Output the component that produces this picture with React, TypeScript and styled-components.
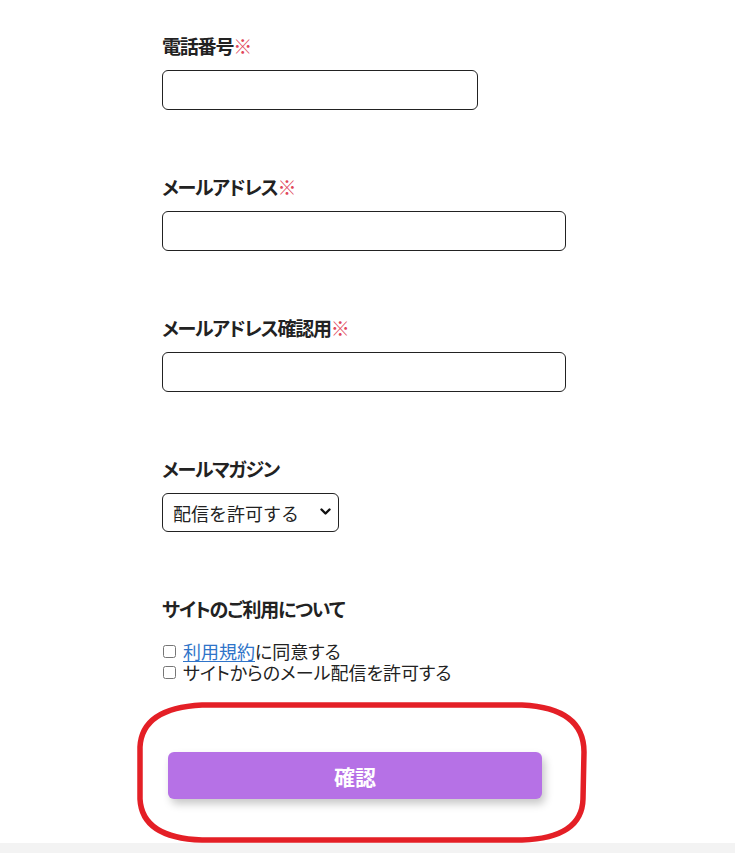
import React from "react";
import styled, { createGlobalStyle } from "styled-components";

const Global = createGlobalStyle`
  html, body { margin: 0; padding: 0; background: #fff; }
  body {
    font-family: "Noto Sans CJK JP", "Noto Sans", sans-serif;
    color: #222;
  }
`;

const Page = styled.div`
  min-height: 853px;
  display: flex;
  flex-direction: column;
`;

const Form = styled.form`
  display: flex;
  flex-direction: column;
  gap: 63px;
  padding: 32px 0 0 162px;
  width: 404px;
`;

const Field = styled.div`
  display: flex;
  flex-direction: column;
  align-items: flex-start;
`;

const Label = styled.label`
  font-size: 19px;
  font-weight: 700;
  line-height: 28px;
  letter-spacing: -1.2px;
  font-feature-settings: "palt" 1;
  margin-bottom: 10px;
  color: #222;
`;

const Req = styled.span`
  color: #e0475a;
  font-weight: 400;
`;

const TextInput = styled.input<{ $w: number }>`
  box-sizing: border-box;
  width: ${(p) => p.$w}px;
  height: 40px;
  border: 1px solid #222;
  border-radius: 6px;
  padding: 0 10px;
  font-size: 16px;
  font-family: inherit;
  background: #fff;
  outline: none;
`;

const SelectWrap = styled.div`
  position: relative;
  width: 177px;
  height: 39px;
`;

const Select = styled.select`
  appearance: none;
  box-sizing: border-box;
  width: 100%;
  height: 100%;
  border: 1px solid #222;
  border-radius: 6px;
  padding: 0 0 0 10px;
  font-size: 18px;
  font-family: "Noto Sans CJK JP", sans-serif;
  color: #222;
  background: #fff;
`;

const Chevron = styled.svg`
  position: absolute;
  right: 8px;
  top: 15px;
  width: 11px;
  height: 8px;
  pointer-events: none;
`;

const Checks = styled.div`
  display: flex;
  flex-direction: column;
  margin-top: 8px;
`;

const CheckRow = styled.label`
  display: flex;
  align-items: center;
  font-size: 18px;
  line-height: 21px;
  font-feature-settings: "palt" 1;
  color: #222;
`;

const Box = styled.input`
  width: 13px;
  height: 13px;
  margin: 0 7px 0 1px;
`;

const TermsLink = styled.a`
  color: #2f74c9;
  text-decoration: underline;
  text-underline-offset: 2px;
`;

const ButtonArea = styled.div`
  position: relative;
  margin-top: 6px;
  padding-left: 6px;
`;

const Submit = styled.button`
  width: 374px;
  height: 47px;
  border: none;
  border-radius: 6px;
  background: #b671e6;
  color: #fff;
  font-family: "Noto Sans CJK JP", sans-serif;
  font-size: 21px;
  font-weight: 700;
  box-shadow: 3px 5px 9px rgba(0, 0, 0, 0.22);
  cursor: pointer;
`;

const Annotation = styled.svg`
  position: absolute;
  left: -30px;
  top: -50px;
  width: 460px;
  height: 141px;
  pointer-events: none;
  overflow: visible;
`;

const Footer = styled.div`
  margin-top: auto;
  height: 10px;
  background: #f3f3f3;
`;

export default function App() {
  return (
    <>
      <Global />
      <Page>
        <Form onSubmit={(e) => e.preventDefault()}>
          <Field>
            <Label>
              電話番号<Req>※</Req>
            </Label>
            <TextInput $w={316} type="tel" />
          </Field>
          <Field>
            <Label>
              メールアドレス<Req>※</Req>
            </Label>
            <TextInput $w={404} type="email" />
          </Field>
          <Field>
            <Label>
              メールアドレス確認用<Req>※</Req>
            </Label>
            <TextInput $w={404} type="email" />
          </Field>
          <Field>
            <Label>メールマガジン</Label>
            <SelectWrap>
              <Select defaultValue="allow">
                <option value="allow">配信を許可する</option>
                <option value="deny">配信を許可しない</option>
              </Select>
              <Chevron viewBox="0 0 11 8">
                <path d="M1.5 1.5 L5.5 5.5 L9.5 1.5" fill="none" stroke="#111" strokeWidth="2.4" strokeLinecap="round" strokeLinejoin="round" />
              </Chevron>
            </SelectWrap>
          </Field>
          <Field>
            <Label>サイトのご利用について</Label>
            <Checks>
              <CheckRow>
                <Box type="checkbox" />
                <span>
                  <TermsLink href="#">利用規約</TermsLink>に同意する
                </span>
              </CheckRow>
              <CheckRow>
                <Box type="checkbox" />
                <span>サイトからのメール配信を許可する</span>
              </CheckRow>
            </Checks>
          </Field>
          <ButtonArea>
            <Submit type="submit">確認</Submit>
            <Annotation viewBox="0 0 460 141">
              <path
                d="M70 3 L390 3 Q452 6 452 50 L451 97 Q450 136 390 138 L70 138 Q10 136 8 97 L8 45 Q10 6 70 3 Z"
                fill="none"
                stroke="#e41f26"
                strokeWidth="5.5"
                strokeLinejoin="round"
              />
            </Annotation>
          </ButtonArea>
        </Form>
        <Footer />
      </Page>
    </>
  );
}
